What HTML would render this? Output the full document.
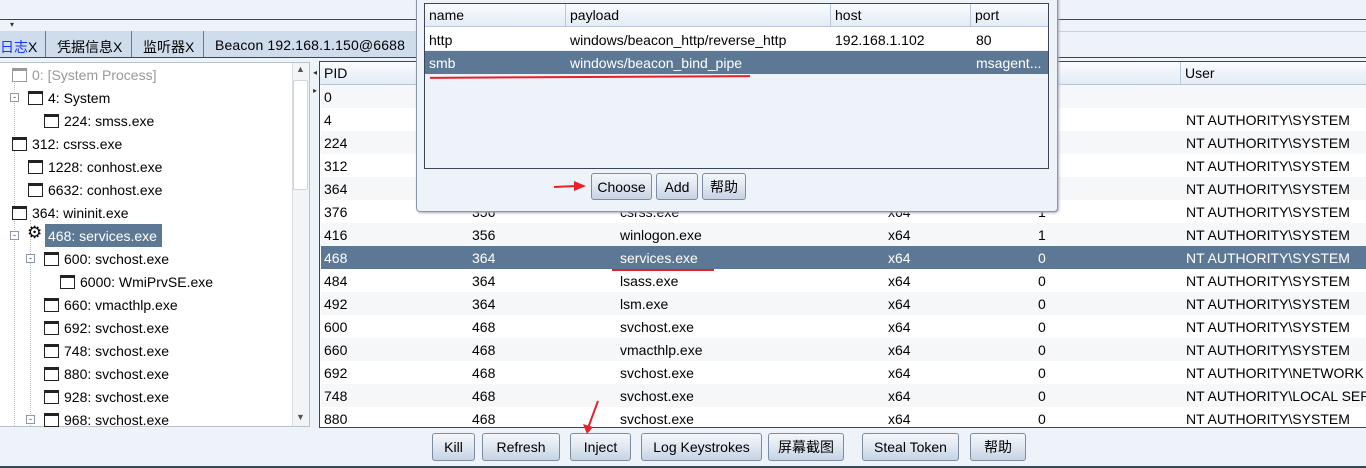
<!DOCTYPE html>
<html><head><meta charset="utf-8"><style>
*{margin:0;padding:0;box-sizing:border-box}
body{width:1366px;height:468px;overflow:hidden;background:#eef2f9;font-family:"Liberation Sans","Noto Sans CJK SC",sans-serif;font-size:14px;color:#000;position:relative}
.a{position:absolute;white-space:nowrap}
.row{position:absolute;left:321px;width:1045px;height:23px;overflow:hidden;white-space:nowrap}
.row span{position:absolute;top:4px;white-space:nowrap}
.box{position:absolute;width:15px;height:14px;border:1px solid #222;border-top:3px solid #222;background:#fff}
.btn{position:absolute;height:28px;border:1px solid #7c8ca3;border-radius:3px;background:linear-gradient(#f4f7fb,#dfe7f1 50%,#c6d3e3);text-align:center;line-height:26px;font-size:14px;white-space:nowrap}
.th{position:absolute;top:0;height:22px;line-height:22px;padding-left:4px;border-right:1px solid #b9c7d8;white-space:nowrap}
.pm{position:absolute;width:9px;height:9px;border:1px solid #8a98a8;background:#fff;font-size:9px;line-height:6px;text-align:center;color:#333}
</style></head><body>
<div class="a" style="left:0;top:19px;width:1366px;height:1px;background:#3a4656"></div>
<div class="a" style="left:10px;top:20px;font-size:8px;color:#333">▾</div>
<div class="a" style="left:0;top:31px;width:1366px;height:1px;background:#c8d2de"></div>
<div class="a" style="left:0;top:31px;width:420px;height:27px;background:#cfdceb;border-bottom:1px solid #6a7a8c"></div>
<div class="a" style="left:0;top:37px;color:#1a33ff">日志<span style="color:#000">X</span></div>
<div class="a" style="left:45px;top:31px;width:1px;height:27px;background:#6a7a8c"></div>
<div class="a" style="left:57px;top:37px">凭据信息X</div>
<div class="a" style="left:131px;top:31px;width:1px;height:27px;background:#6a7a8c"></div>
<div class="a" style="left:143px;top:37px">监听器X</div>
<div class="a" style="left:203px;top:31px;width:1px;height:27px;background:#6a7a8c"></div>
<div class="a" style="left:215px;top:37px;letter-spacing:0.15px">Beacon 192.168.1.150@6688</div>
<div class="a" style="left:0;top:57px;width:1366px;height:1px;background:#3a4656"></div>
<!-- tree -->
<div class="a" style="left:0;top:62px;width:310px;height:365px;background:#fff;border:1px solid #b9c2cc;border-left:none"></div>
<div class="a" style="left:292px;top:63px;width:17px;height:363px;background:#f3f4f6;border-left:1px solid #d8dde3"></div>
<div class="a" style="left:293px;top:80px;width:15px;height:110px;background:#fff;border:1px solid #cfd4da;border-radius:2px"></div>
<div class="a" style="left:296px;top:64px;font-size:9px;color:#555">▲</div>
<div class="a" style="left:296px;top:412px;font-size:9px;color:#555">▼</div>
<div class="a" style="left:14px;top:83px;width:1px;height:343px;border-left:1px dotted #b0bccc"></div>
<div class="a" style="left:30px;top:220px;width:1px;height:206px;border-left:1px dotted #b0bccc"></div>
<div class="box" style="left:12px;top:68px;border-color:#999"></div><div class="a" style="left:32px;top:67px;color:#999">0: [System Process]</div>
<div class="pm" style="left:10px;top:93px">-</div><div class="box" style="left:28px;top:91px"></div><div class="a" style="left:48px;top:90px">4: System</div>
<div class="box" style="left:44px;top:114px"></div><div class="a" style="left:64px;top:113px">224: smss.exe</div>
<div class="box" style="left:12px;top:137px"></div><div class="a" style="left:32px;top:136px">312: csrss.exe</div>
<div class="box" style="left:28px;top:160px"></div><div class="a" style="left:48px;top:159px">1228: conhost.exe</div>
<div class="box" style="left:28px;top:183px"></div><div class="a" style="left:48px;top:182px">6632: conhost.exe</div>
<div class="box" style="left:12px;top:206px"></div><div class="a" style="left:32px;top:205px">364: wininit.exe</div>
<div class="pm" style="left:10px;top:231px">-</div><div class="a" style="left:27px;top:223px;font-size:17px;font-family:'DejaVu Sans'">⚙</div>
<div class="a" style="left:45px;top:224px;width:117px;height:23px;background:#5d7895"></div><div class="a" style="left:48px;top:228px;color:#fff">468: services.exe</div>
<div class="pm" style="left:26px;top:254px">-</div><div class="box" style="left:44px;top:252px"></div><div class="a" style="left:64px;top:251px">600: svchost.exe</div>
<div class="box" style="left:60px;top:275px"></div><div class="a" style="left:80px;top:274px">6000: WmiPrvSE.exe</div>
<div class="box" style="left:44px;top:298px"></div><div class="a" style="left:64px;top:297px">660: vmacthlp.exe</div>
<div class="box" style="left:44px;top:321px"></div><div class="a" style="left:64px;top:320px">692: svchost.exe</div>
<div class="box" style="left:44px;top:344px"></div><div class="a" style="left:64px;top:343px">748: svchost.exe</div>
<div class="box" style="left:44px;top:367px"></div><div class="a" style="left:64px;top:366px">880: svchost.exe</div>
<div class="box" style="left:44px;top:390px"></div><div class="a" style="left:64px;top:389px">928: svchost.exe</div>
<div class="pm" style="left:26px;top:415px">-</div><div class="box" style="left:44px;top:413px"></div><div class="a" style="left:64px;top:412px">968: svchost.exe</div>
<div class="a" style="left:313px;top:68px;font-size:8px;color:#333">◂</div>
<div class="a" style="left:313px;top:86px;font-size:8px;color:#333">▸</div>
<!-- table -->
<div class="a" style="left:319px;top:61px;width:1047px;height:367px;background:#fff;border:1px solid #3a4656;border-right:none"></div>
<div class="a" style="left:320px;top:62px;width:1046px;height:23px;background:linear-gradient(#fafcff,#e3ebf5);border-bottom:1px solid #b9c7d8">
<div class="th" style="left:0;width:148px">PID</div><div class="th" style="left:148px;width:148px"></div><div class="th" style="left:296px;width:268px"></div><div class="th" style="left:564px;width:150px"></div><div class="th" style="left:714px;width:147px">话</div><div class="th" style="left:861px;width:185px;border:none">User</div></div>
<div class="row" style="top:85px;background:#f6f7f9"><span style="left:3px">0</span></div>
<div class="row" style="top:108px"><span style="left:3px">4</span><span style="left:865px">NT AUTHORITY\SYSTEM</span></div>
<div class="row" style="top:131px;background:#f6f7f9"><span style="left:3px">224</span><span style="left:865px">NT AUTHORITY\SYSTEM</span></div>
<div class="row" style="top:154px"><span style="left:3px">312</span><span style="left:865px">NT AUTHORITY\SYSTEM</span></div>
<div class="row" style="top:177px;background:#f6f7f9"><span style="left:3px">364</span><span style="left:865px">NT AUTHORITY\SYSTEM</span></div>
<div class="row" style="top:200px"><span style="left:3px">376</span><span style="left:151px">356</span><span style="left:299px">csrss.exe</span><span style="left:567px">x64</span><span style="left:717px">1</span><span style="left:865px">NT AUTHORITY\SYSTEM</span></div>
<div class="row" style="top:223px;background:#f6f7f9"><span style="left:3px">416</span><span style="left:151px">356</span><span style="left:299px">winlogon.exe</span><span style="left:567px">x64</span><span style="left:717px">1</span><span style="left:865px">NT AUTHORITY\SYSTEM</span></div>
<div class="row" style="top:246px;background:#5d7895;color:#fff"><span style="left:3px">468</span><span style="left:151px">364</span><span style="left:299px">services.exe</span><span style="left:567px">x64</span><span style="left:717px">0</span><span style="left:865px">NT AUTHORITY\SYSTEM</span></div>
<div class="row" style="top:269px"><span style="left:3px">484</span><span style="left:151px">364</span><span style="left:299px">lsass.exe</span><span style="left:567px">x64</span><span style="left:717px">0</span><span style="left:865px">NT AUTHORITY\SYSTEM</span></div>
<div class="row" style="top:292px;background:#f6f7f9"><span style="left:3px">492</span><span style="left:151px">364</span><span style="left:299px">lsm.exe</span><span style="left:567px">x64</span><span style="left:717px">0</span><span style="left:865px">NT AUTHORITY\SYSTEM</span></div>
<div class="row" style="top:315px"><span style="left:3px">600</span><span style="left:151px">468</span><span style="left:299px">svchost.exe</span><span style="left:567px">x64</span><span style="left:717px">0</span><span style="left:865px">NT AUTHORITY\SYSTEM</span></div>
<div class="row" style="top:338px;background:#f6f7f9"><span style="left:3px">660</span><span style="left:151px">468</span><span style="left:299px">vmacthlp.exe</span><span style="left:567px">x64</span><span style="left:717px">0</span><span style="left:865px">NT AUTHORITY\SYSTEM</span></div>
<div class="row" style="top:361px"><span style="left:3px">692</span><span style="left:151px">468</span><span style="left:299px">svchost.exe</span><span style="left:567px">x64</span><span style="left:717px">0</span><span style="left:865px">NT AUTHORITY\NETWORK S</span></div>
<div class="row" style="top:384px;background:#f6f7f9"><span style="left:3px">748</span><span style="left:151px">468</span><span style="left:299px">svchost.exe</span><span style="left:567px">x64</span><span style="left:717px">0</span><span style="left:865px">NT AUTHORITY\LOCAL SER</span></div>
<div class="row" style="top:407px;height:21px"><span style="left:3px">880</span><span style="left:151px">468</span><span style="left:299px">svchost.exe</span><span style="left:567px">x64</span><span style="left:717px">0</span><span style="left:865px">NT AUTHORITY\SYSTEM</span></div>
<div class="a" style="left:612px;top:269px;width:102px;height:2px;background:#e8202a"></div>
<!-- bottom buttons -->
<div class="a" style="left:0;top:428px;width:1366px;height:40px;background:#eef2f9"></div>
<div class="btn" style="left:432px;top:433px;width:43px">Kill</div>
<div class="btn" style="left:482px;top:433px;width:78px">Refresh</div>
<div class="btn" style="left:570px;top:433px;width:61px">Inject</div>
<div class="btn" style="left:641px;top:433px;width:121px">Log Keystrokes</div>
<div class="btn" style="left:768px;top:433px;width:76px">屏幕截图</div>
<div class="btn" style="left:862px;top:433px;width:97px">Steal Token</div>
<div class="btn" style="left:970px;top:433px;width:56px">帮助</div>
<div class="a" style="left:0;top:466px;width:1366px;height:2px;background:#3a4656"></div>
<svg class="a" style="left:580px;top:398px" width="24" height="40"><path d="M18 3 L8 30" stroke="#e8202a" stroke-width="2"/><path d="M3 26 L7 36 L13 29 Z" fill="#e8202a"/></svg>
<!-- dialog -->
<div class="a" style="left:416px;top:-2px;width:642px;height:214px;background:#eef2f9;border:1px solid #8a96a6;border-radius:0 0 4px 4px;box-shadow:1px 1px 2px #aab"></div>
<div class="a" style="left:424px;top:3px;width:625px;height:166px;background:#eef2f9;border:1px solid #3a4656"></div>
<div class="a" style="left:425px;top:4px;width:623px;height:23px;background:linear-gradient(#fafcff,#e3ebf5);border-bottom:1px solid #b9c7d8">
<div class="th" style="left:0;width:141px">name</div><div class="th" style="left:141px;width:265px">payload</div><div class="th" style="left:406px;width:140px">host</div><div class="th" style="left:546px;width:77px;border:none">port</div></div>
<div class="a" style="left:425px;top:27px;width:623px;height:23px;background:#fff"></div>
<div class="a" style="left:429px;top:32px">http</div><div class="a" style="left:570px;top:32px">windows/beacon_http/reverse_http</div><div class="a" style="left:835px;top:32px">192.168.1.102</div><div class="a" style="left:976px;top:32px">80</div>
<div class="a" style="left:425px;top:51px;width:623px;height:23px;background:#5d7895"></div>
<div class="a" style="left:429px;top:55px;color:#fff">smb</div><div class="a" style="left:570px;top:55px;color:#fff">windows/beacon_bind_pipe</div><div class="a" style="left:976px;top:55px;color:#fff">msagent...</div>
<div class="a" style="left:430px;top:76px;width:320px;height:2px;background:#e8202a;transform:rotate(-0.3deg)"></div>
<div class="btn" style="left:591px;top:173px;width:61px;height:27px">Choose</div>
<div class="btn" style="left:656px;top:173px;width:42px;height:27px">Add</div>
<div class="btn" style="left:702px;top:173px;width:44px;height:27px">帮助</div>
<svg class="a" style="left:552px;top:180px" width="36" height="14"><path d="M2 7 L24 6" stroke="#e8202a" stroke-width="2"/><path d="M22 1 L34 6 L22 11 Z" fill="#e8202a"/></svg>
</body></html>
